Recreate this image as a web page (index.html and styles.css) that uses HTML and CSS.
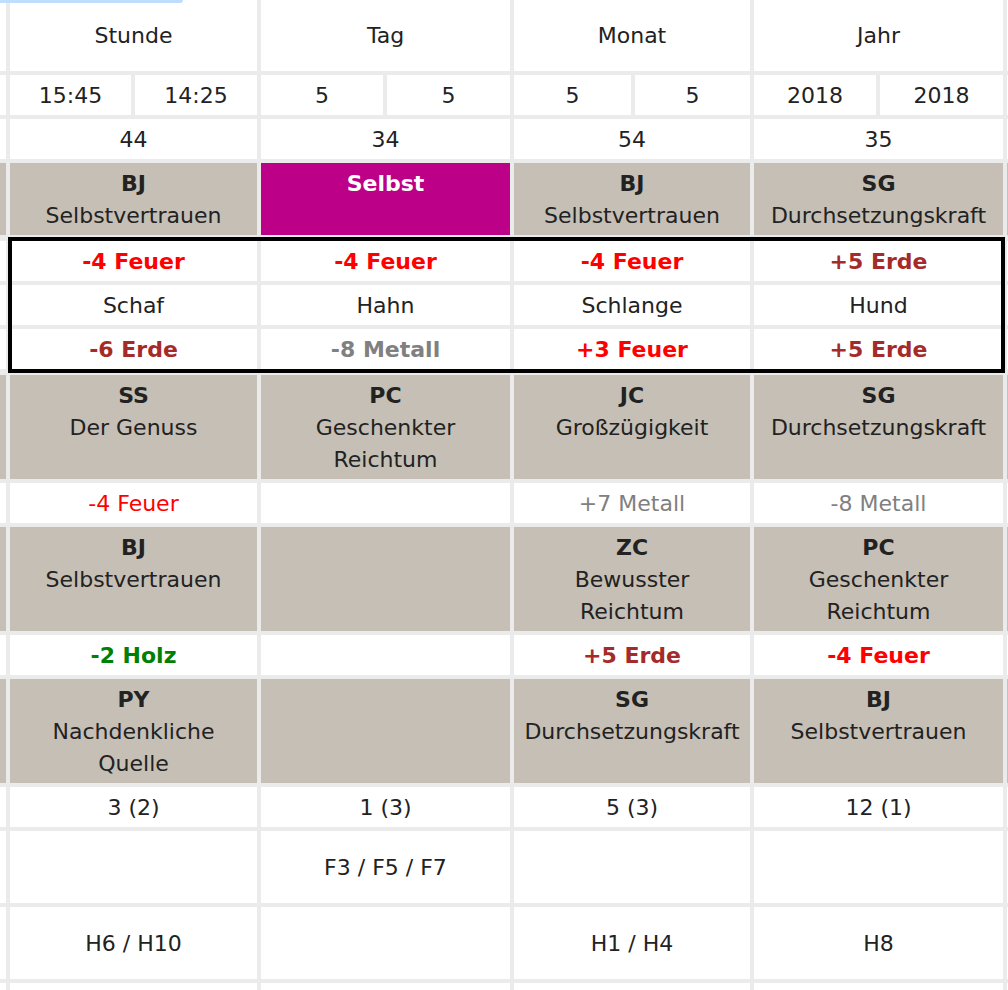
FILE: index.html
```html
<!DOCTYPE html>
<html lang="de">
<head>
<meta charset="utf-8">
<title>Tabelle</title>
<link rel="stylesheet" href="styles.css">
</head>
<body>
<div class="topbar"></div>
<div class="grid">
  <!-- row 1 -->
  <div class="edge"></div>
  <div class="c w2 mid head">Stunde</div>
  <div class="c w2 mid head">Tag</div>
  <div class="c w2 mid head">Monat</div>
  <div class="c w2 mid head">Jahr</div>
  <div class="edge"></div>
  <!-- row 2 -->
  <div class="edge"></div>
  <div class="c mid">15:45</div>
  <div class="c mid">14:25</div>
  <div class="c mid">5</div>
  <div class="c mid">5</div>
  <div class="c mid">5</div>
  <div class="c mid">5</div>
  <div class="c mid">2018</div>
  <div class="c mid">2018</div>
  <div class="edge"></div>
  <!-- row 3 -->
  <div class="edge"></div>
  <div class="c w2 mid">44</div>
  <div class="c w2 mid">34</div>
  <div class="c w2 mid">54</div>
  <div class="c w2 mid">35</div>
  <div class="edge"></div>
  <!-- row 4 -->
  <div class="edge tan"></div>
  <div class="c w2 tan"><b>BJ</b><span>Selbstvertrauen</span></div>
  <div class="c w2 self"><b>Selbst</b></div>
  <div class="c w2 tan"><b>BJ</b><span>Selbstvertrauen</span></div>
  <div class="c w2 tan"><b>SG</b><span>Durchsetzungskraft</span></div>
  <div class="edge tan"></div>
  <!-- framed block -->
  <div class="block">
    <div class="edge"></div>
    <div class="c w2 mid bold fire">-4 Feuer</div>
    <div class="c w2 mid bold fire">-4 Feuer</div>
    <div class="c w2 mid bold fire">-4 Feuer</div>
    <div class="c w2 mid bold earth">+5 Erde</div>
    <div class="edge"></div>

    <div class="edge"></div>
    <div class="c w2 mid">Schaf</div>
    <div class="c w2 mid">Hahn</div>
    <div class="c w2 mid">Schlange</div>
    <div class="c w2 mid">Hund</div>
    <div class="edge"></div>

    <div class="edge"></div>
    <div class="c w2 mid bold earth">-6 Erde</div>
    <div class="c w2 mid bold metal">-8 Metall</div>
    <div class="c w2 mid bold fire">+3 Feuer</div>
    <div class="c w2 mid bold earth">+5 Erde</div>
    <div class="edge"></div>

    <div class="frame"></div>
  </div>
  <!-- row 6 -->
  <div class="edge tan"></div>
  <div class="c w2 tan"><b>SS</b><span>Der Genuss</span></div>
  <div class="c w2 tan"><b>PC</b><span>Geschenkter</span><span>Reichtum</span></div>
  <div class="c w2 tan"><b>JC</b><span>Großzügigkeit</span></div>
  <div class="c w2 tan"><b>SG</b><span>Durchsetzungskraft</span></div>
  <div class="edge tan"></div>
  <!-- row 7 -->
  <div class="edge"></div>
  <div class="c w2 mid fire">-4 Feuer</div>
  <div class="c w2 mid"></div>
  <div class="c w2 mid metal">+7 Metall</div>
  <div class="c w2 mid metal">-8 Metall</div>
  <div class="edge"></div>
  <!-- row 8 -->
  <div class="edge tan"></div>
  <div class="c w2 tan"><b>BJ</b><span>Selbstvertrauen</span></div>
  <div class="c w2 tan"></div>
  <div class="c w2 tan"><b>ZC</b><span>Bewusster</span><span>Reichtum</span></div>
  <div class="c w2 tan"><b>PC</b><span>Geschenkter</span><span>Reichtum</span></div>
  <div class="edge tan"></div>
  <!-- row 9 -->
  <div class="edge"></div>
  <div class="c w2 mid bold wood">-2 Holz</div>
  <div class="c w2 mid"></div>
  <div class="c w2 mid bold earth">+5 Erde</div>
  <div class="c w2 mid bold fire">-4 Feuer</div>
  <div class="edge"></div>
  <!-- row 10 -->
  <div class="edge tan"></div>
  <div class="c w2 tan"><b>PY</b><span>Nachdenkliche</span><span>Quelle</span></div>
  <div class="c w2 tan"></div>
  <div class="c w2 tan"><b>SG</b><span>Durchsetzungskraft</span></div>
  <div class="c w2 tan"><b>BJ</b><span>Selbstvertrauen</span></div>
  <div class="edge tan"></div>
  <!-- row 11 -->
  <div class="edge"></div>
  <div class="c w2 mid">3 (2)</div>
  <div class="c w2 mid">1 (3)</div>
  <div class="c w2 mid">5 (3)</div>
  <div class="c w2 mid">12 (1)</div>
  <div class="edge"></div>
  <!-- row 12 -->
  <div class="edge"></div>
  <div class="c w2 mid"></div>
  <div class="c w2 mid">F3 / F5 / F7</div>
  <div class="c w2 mid"></div>
  <div class="c w2 mid"></div>
  <div class="edge"></div>
  <!-- row 13 -->
  <div class="edge"></div>
  <div class="c w2 mid">H6 / H10</div>
  <div class="c w2 mid"></div>
  <div class="c w2 mid">H1 / H4</div>
  <div class="c w2 mid">H8</div>
  <div class="edge"></div>
  <!-- row 14 -->
  <div class="edge"></div>
  <div class="c w2 mid"></div>
  <div class="c w2 mid"></div>
  <div class="c w2 mid"></div>
  <div class="c w2 mid"></div>
  <div class="edge"></div>
</div>
</body>
</html>
```

FILE: styles.css
```css
html, body {
  margin: 0;
  padding: 0;
  background: #ebebeb;
  overflow: hidden;
  height: 990px;
}

body {
  position: relative;
  font-family: "DejaVu Sans", Verdana, sans-serif;
  font-size: 22px;
  line-height: 32px;
  color: #222;
}

.topbar {
  position: absolute;
  top: 0;
  left: 0;
  width: 183px;
  height: 3px;
  background: #bfdefd;
  border-bottom-right-radius: 4px;
  z-index: 5;
}

.grid {
  display: grid;
  width: 1027px;
  grid-template-columns: 6px 121px 122px 122px 123px 117px 115px 122px 123px 20px;
  grid-template-rows: 71px 40px 40px 72px 132px 104px 40px 104px 40px 104px 40px 72px 72px 40px;
  gap: 4px;
  background: #ebebeb;
}

.edge {
  background: #fff;
}

.c {
  background: #fff;
  display: flex;
  flex-direction: column;
  align-items: center;
  text-align: center;
  padding: 5px 2px 3px;
  box-sizing: border-box;
  white-space: nowrap;
}

.c.head {
  padding: 4px 2px;
}

.w2 {
  grid-column: span 2;
}

.mid {
  justify-content: center;
}

.tan {
  background: #c6bfb5;
  justify-content: flex-start;
}

.edge.tan {
  background: #c6bfb5;
}

.c b {
  font-weight: bold;
}

.self {
  background: #bc0087;
  color: #fff;
  justify-content: flex-start;
}

.bold {
  font-weight: bold;
}

.fire {
  color: #ff0000;
}

.earth {
  color: #a52a2a;
}

.metal {
  color: #808080;
}

.wood {
  color: #008000;
}

.block {
  position: relative;
  grid-column: 1 / -1;
  display: grid;
  grid-template-columns: 6px 121px 122px 122px 123px 117px 115px 122px 123px 20px;
  grid-template-rows: 40px 40px 40px;
  gap: 4px;
  padding: 2px 0;
  background: #ebebeb;
}

.frame {
  position: absolute;
  top: -2px;
  left: 8px;
  width: 997px;
  height: 136px;
  box-sizing: border-box;
  border: 4px solid #000;
  pointer-events: none;
}
```
